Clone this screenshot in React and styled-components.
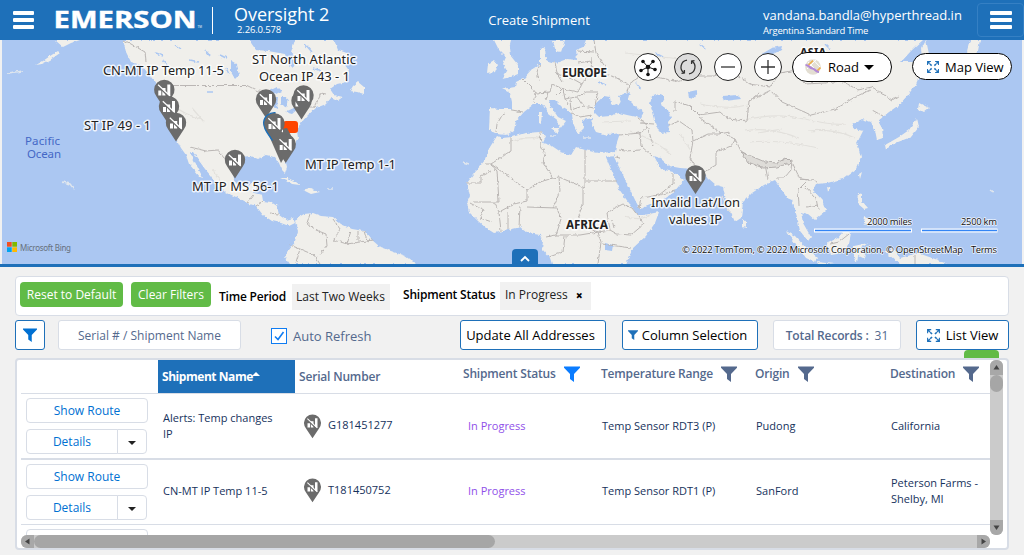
import React from "react";
import styled, { createGlobalStyle, css } from "styled-components";

const BLUE = "#1e70b9";
const LINE = "#d8dde6";
const INK = "#16325c";
const SLATE = "#54698d";

const Global = createGlobalStyle`
  * { box-sizing: border-box; }
  body {
    margin: 0;
    background: #f1f1f1;
    font-family: "Open Sans", "Noto Sans", sans-serif;
    overflow: hidden;
  }
  button { font-family: inherit; margin: 0; padding: 0; cursor: pointer; }
`;

const Page = styled.div`
  width: 1024px;
  height: 555px;
  display: flex;
  flex-direction: column;
  overflow: hidden;
`;

/* ---------- header ---------- */

const Header = styled.header`
  height: 40px;
  flex: none;
  display: flex;
  align-items: center;
  background: ${BLUE};
  color: #fff;
  white-space: nowrap;
`;

const Bars = styled.span`
  display: flex;
  flex-direction: column;
  gap: 3px;
  width: ${(p) => p.$w || 21}px;
  i { display: block; height: 4px; background: #fff; border-radius: 1px; }
`;

const MenuButton = styled.button`
  border: ${(p) => (p.$framed ? "1px solid #3580c4" : "0")};
  border-radius: 4px;
  background: transparent;
  height: 34px;
  width: 47px;
  padding-left: ${(p) => (p.$framed ? 12 : 13)}px;
`;

const Logo = styled.svg`
  display: block;
  width: 150px;
  height: 24px;
  margin-left: 6px;
  overflow: visible;
`;

const Divider = styled.span`
  width: 1px;
  height: 27px;
  margin-left: 9px;
  background: #fff;
`;

const TitleBlock = styled.div`
  margin-left: 21px;
  width: 180px;
  height: 40px;
  padding-top: 3px;
`;

const Title = styled.div`
  font-size: 18px;
  line-height: 23px;
  letter-spacing: -0.05px;
`;

const Version = styled.div`
  font-size: 9.5px;
  line-height: 8px;
  padding-left: 3px;
  letter-spacing: -0.15px;
`;

const PageName = styled.div`
  width: 250px;
  text-align: center;
  font-size: 13px;
  line-height: 18px;
`;

const User = styled.div`
  margin-left: auto;
  width: 214px;
  height: 40px;
  padding-top: 6px;
`;

const Email = styled.div`
  font-size: 13px;
  line-height: 18px;
`;

const Zone = styled.div`
  font-size: 9.5px;
  line-height: 13px;
  letter-spacing: -0.22px;
`;

/* ---------- map ---------- */

const MapArea = styled.section`
  position: relative;
  flex: none;
  height: 227px;
  border-bottom: 3px solid ${BLUE};
  padding: 0 2px;
`;

const MapCanvas = styled.svg`
  display: block;
  width: 1020px;
  height: 224px;
  background: #abc7f2;
`;

const MapControls = styled.div`
  position: absolute;
  top: 12px;
  left: 634px;
  width: 378px;
  height: 30px;
  display: flex;
  align-items: center;
`;

const RoundButton = styled.button`
  width: 28px;
  height: 28px;
  margin-right: 12px;
  border: 1px solid #222;
  border-radius: 50%;
  background: ${(p) => (p.$dim ? "#dcdcdc" : "#fff")};
  display: flex;
  align-items: center;
  justify-content: center;
`;

const Pill = styled.button`
  height: ${(p) => p.$h}px;
  width: 100px;
  margin-left: ${(p) => p.$left || 0}px;
  margin-right: ${(p) => p.$right || 0}px;
  margin-bottom: ${(p) => p.$lift || 0}px;
  border: 1px solid #000;
  border-radius: 15px;
  background: #fff;
  font-size: 13px;
  color: #000;
  display: flex;
  align-items: center;
  padding-left: ${(p) => p.$pad}px;
  gap: ${(p) => p.$gap}px;
  white-space: nowrap;
`;

const Caret = styled.i`
  border: 5px solid transparent;
  border-width: ${(p) => p.$s || 5}px ${(p) => p.$s || 5}px 0;
  border-top-color: ${(p) => p.$c || "#000"};
  margin-left: ${(p) => p.$shift || 0}px;
`;

const CollapseTab = styled.button`
  position: absolute;
  left: 512px;
  bottom: 0;
  width: 26px;
  height: 15px;
  border: 0;
  border-radius: 4px 4px 0 0;
  background: ${BLUE};
  display: flex;
  align-items: center;
  justify-content: center;
  padding-top: 3px;
`;

/* ---------- filters and toolbar ---------- */

const Content = styled.main`
  flex: 1;
  padding: 9px 15px 0;
  display: flex;
  flex-direction: column;
`;

const FilterPanel = styled.div`
  height: 40px;
  flex: none;
  background: #fff;
  border: 1px solid ${LINE};
  border-radius: 4px;
  display: flex;
  align-items: flex-start;
  padding: 5px 0 0 4px;
  white-space: nowrap;
`;

const GreenButton = styled.button`
  height: 25px;
  width: ${(p) => p.$w}px;
  margin-right: 8px;
  border: 0;
  border-radius: 4px;
  background: #61bb46;
  color: #fff;
  font-size: 12px;
`;

const FilterName = styled.span`
  width: ${(p) => p.$w}px;
  margin-top: ${(p) => p.$top}px;
  font-size: 12px;
  font-weight: 600;
  line-height: 18px;
  color: #000;
  letter-spacing: -0.2px;
`;

const Chip = styled.span`
  margin-top: ${(p) => p.$top || 0}px;
  margin-right: 13px;
  width: ${(p) => p.$w}px;
  height: ${(p) => p.$h}px;
  line-height: 25px;
  padding-left: ${(p) => p.$pad || 5}px;
  background: #f1f1f1;
  font-size: 12px;
  color: #222;
  display: flex;
  gap: 8px;
  b { font-size: 12px; line-height: 27px; font-weight: 800; color: #000; }
`;

const Toolbar = styled.div`
  height: 30px;
  flex: none;
  margin-top: 4px;
  display: flex;
  align-items: center;
  white-space: nowrap;
`;

const box = css`
  height: 30px;
  width: ${(p) => p.$w}px;
  margin-left: ${(p) => p.$left || 0}px;
  padding-right: ${(p) => p.$nudge || 0}px;
  background: #fff;
  border-radius: 3px;
  display: flex;
  align-items: center;
  justify-content: center;
`;

const OutlineButton = styled.button`
  ${box}
  border: 1px solid ${BLUE};
  font-size: 13px;
  color: #000;
  gap: ${(p) => p.$gap || 4}px;
`;

const SearchBox = styled.div`
  ${box}
  border: 1px solid ${LINE};
  font-size: 12px;
  color: ${SLATE};
`;

const Total = styled.div`
  ${box}
  border: 1px solid ${LINE};
  font-size: 12px;
  color: ${SLATE};
  gap: 6px;
  b { font-weight: 600; letter-spacing: -0.15px; }
`;

const Check = styled.label`
  display: flex;
  align-items: center;
  gap: 6px;
  margin-left: 30px;
  width: 189px;
  padding-top: 2px;
  font-size: 13px;
  color: ${SLATE};
`;

const CheckSquare = styled.span`
  width: 16px;
  height: 16px;
  border: 1px solid #0f7cf2;
  background: #fff;
  display: flex;
  align-items: center;
  justify-content: center;
`;

/* ---------- table ---------- */

const GreenTab = styled.span`
  align-self: flex-end;
  flex: none;
  width: 35px;
  height: 8px;
  margin-right: 10px;
  border-radius: 4px 4px 0 0;
  background: #61bb46;
`;

const Panel = styled.div`
  flex: none;
  height: 192px;
  border: 2px solid ${LINE};
  border-radius: 4px;
  background: #fff;
  padding: 0 4px;
  display: grid;
  grid-template-columns: 969px 13px;
  grid-template-rows: 175px 13px;
`;

const Viewport = styled.div`
  overflow: hidden;
`;

const grid = css`
  display: grid;
  grid-template-columns: 137px 137px 164px 138px 154px 135px 104px;
`;

const HeadRow = styled.div`
  ${grid}
  height: 34px;
  border-bottom: 1px solid ${LINE};
`;

const HeadCell = styled.div`
  display: flex;
  align-items: center;
  gap: 8px;
  height: 33px;
  padding-left: 4px;
  padding-bottom: ${(p) => p.$up || 0}px;
  background: ${(p) => (p.$active ? BLUE : "transparent")};
  color: ${(p) => (p.$active ? "#fff" : SLATE)};
  font-size: 12px;
  font-weight: ${(p) => (p.$active ? 700 : 600)};
  letter-spacing: ${(p) => (p.$active ? -0.45 : -0.18)}px;
  white-space: nowrap;
  svg { flex: none; margin-top: 2px; }
`;

const SortMark = styled.i`
  margin: -6px 0 0 -9px;
  border: 4px solid transparent;
  border-width: 0 4px 4px;
  border-bottom-color: #fff;
`;

const Row = styled.div`
  ${grid}
  height: ${(p) => p.$h}px;
  border-bottom: ${(p) => p.$line}px solid ${LINE};
`;

const Cell = styled.div`
  display: flex;
  align-items: center;
  padding-left: ${(p) => p.$pad || 5}px;
  padding-bottom: ${(p) => p.$up || 0}px;
  font-size: 11px;
  line-height: ${(p) => p.$lh || 16}px;
  color: ${(p) => p.$color || INK};
  white-space: pre-line;
`;

const SerialCell = styled(Cell)`
  padding-left: 9px;
  padding-bottom: ${(p) => 2 + (p.$up || 0)}px;
  gap: 7px;
  svg { margin-top: ${(p) => (p.$up ? 1 : 2)}px; }
`;

const Actions = styled.div`
  padding: 4px 0 0 5px;
`;

const ActionButton = styled.button`
  display: block;
  width: ${(p) => p.$w}px;
  height: 25px;
  background: #fff;
  border: 1px solid ${LINE};
  border-radius: ${(p) => p.$r || "4px"};
  color: #0070d2;
  font-size: 12px;
`;

const Split = styled.div`
  display: flex;
  margin-top: 6px;
`;

const CaretButton = styled.button`
  width: 30px;
  height: 25px;
  margin-left: -1px;
  border: 1px solid ${LINE};
  border-radius: 0 4px 4px 0;
  background: #fff;
  display: flex;
  align-items: center;
  justify-content: center;
  padding-top: 2px;
`;

const ScrollTrack = styled.div`
  display: flex;
  flex-direction: ${(p) => (p.$v ? "column" : "row")};
  background: #cbcbcb;
  border-radius: 6px;
  overflow: hidden;
`;

const ScrollEnd = styled.span`
  width: 13px;
  height: ${(p) => (p.$v ? 15 : 13)}px;
  flex: none;
  background: #a8a8a8;
  display: flex;
  align-items: center;
  justify-content: center;
  &:last-child { margin-${(p) => (p.$v ? "top" : "left")}: auto; }
`;

const Thumb = styled.span`
  width: ${(p) => p.$w}px;
  height: ${(p) => p.$h}px;
  border-radius: 7px;
  background: #a6a6a6;
`;

/* ---------- icons ---------- */

const Funnel = ({ size = 16, color = SLATE }) => (
  <svg width={size} height={size} viewBox="0 0 16 16">
    <path d="M0 0.5h16v1.2L10 8v8l-4-3V8L0 1.7z" fill={color} />
  </svg>
);

const Expand = ({ size = 13 }) => (
  <svg width={size} height={size} viewBox="0 0 13 13" fill="none" stroke={BLUE} strokeWidth="1.1">
    <path d="M0.6 4.2V0.6H4.2M8.8 0.6h3.6v3.6M12.4 8.8v3.6H8.8M4.2 12.4H0.6V8.8" />
    <path d="M1 1l4.2 4.2M12 1L7.8 5.2M12 12L7.8 7.8M1 12l4.2-4.2" strokeWidth="1.6" strokeDasharray="2.6 0.5" />
  </svg>
);

const Arrow = ({ dir }) => {
  const turn = { up: 0, right: 90, down: 180, left: 270 }[dir];
  return (
    <svg width="7" height="7" viewBox="0 0 7 7">
      <path d="M3.5 1L6.5 5.5H0.5z" fill="#444" transform={`rotate(${turn} 3.5 3.5)`} />
    </svg>
  );
};

const PinShape = () => (
  <g>
    <path d="M0 18.500L-7.800 6.600A10.200 10.200 0 1 1 7.800 6.600z" fill="#6b6b6b" />
    <path d="M-6 0.500h3v5h-3zM-2-2h3.200v7.500h-3.200zM3-5.500h3v11h-3z" fill="#fff" />
    <path d="M-6-3.800L4.500 6.700" stroke="#6b6b6b" strokeWidth="1.600" />
    <path d="M-6.200-5.200L5.800 6" stroke="#fff" strokeWidth="1.200" />
  </g>
);

const SerialPin = () => (
  <svg width="17" height="25" viewBox="-10.2 -10.2 20.4 29">
    <PinShape />
  </svg>
);

/* ---------- map drawing ---------- */

const LAND = [
  // North and Central America
  "M123 40L126 52L131 62L141 65L148 73L154 81L160 88L161 97L164 112L166 120L172 131L178 142L181 148L186 155L189 164L195 171L200 177L203 178L199 170L194 160L190 152L193 152L197 158L205 169L211 176L216 184L225 192L236 197L247 203L256 206L263 215L272 221L281 223L289 226L295 223L293 218L286 220L279 215L277 206L271 202L263 201L262 195L254 193L259 183L252 182L248 187L239 187L234 180L233 168L240 157L251 156L258 159L266 155L275 157L279 163L282 170L285 173L287 167L285 158L292 147L298 138L297 131L301 123L308 115L316 108L326 104L331 98L337 101L343 97L334 95L330 89L337 84L346 82L350 72L345 65L350 62L347 53L338 50L334 40L295 40L291 52L297 60L293 68L287 62L285 54L268 51L256 50L249 40z",
  "M353 86L358 82L364 87L364 94L357 92L350 91z",
  // Alaska chain
  "M55 40L63 47L71 43L80 40z",
  "M36 65L43 61L50 56L58 51L60 53L50 60L42 64z",
  // Caribbean
  "M281 178L288 178L296 182L300 185L292 184L286 180z",
  "M303 190L311 188L320 192L311 194z",
  // South America
  "M295 222L299 217L304 214L313 213L321 216L333 217L341 224L352 229L364 231L371 239L380 247L391 251L405 256L416 264L290 264L285 257L288 250L295 241L298 231z",
  // British Isles
  "M494 40L511 40L509 48L510 55L518 65L518 74L511 77L502 79L507 71L503 64L506 57L499 50z",
  "M488 64L494 60L498 65L495 72L487 73z",
  // Africa
  "M497 136L490 147L485 160L476 171L467 183L470 196L467 203L469 212L478 221L486 228L494 233L508 230L521 227L528 233L540 235L543 241L542 249L550 258L552 264L626 264L632 249L646 236L655 223L659 212L644 215L637 215L632 207L626 199L619 189L614 176L608 162L606 157L615 156L615 152L598 153L585 150L576 147L571 155L561 152L552 146L543 143L546 136L540 132L525 133L512 137L502 138z",
  // Europe and Asia
  "M490 108L500 109L512 109L512 102L510 93L502 89L515 87L516 82L524 78L531 70L540 64L540 50L545 47L546 60L556 63L567 59L577 60L576 50L583 47L586 40L923 40L911 51L901 62L916 62L921 72L916 84L908 95L899 105L889 112L878 121L882 128L883 138L877 140L875 130L871 122L862 119L853 124L855 129L863 131L857 143L861 157L856 169L843 179L827 183L816 184L813 190L822 200L826 211L815 220L808 214L801 212L803 223L811 237L808 241L800 231L797 217L792 200L787 198L780 187L775 180L764 185L752 193L743 202L741 218L735 222L727 204L723 187L716 185L708 178L703 171L693 169L680 168L669 166L660 158L654 156L661 169L673 172L684 180L673 193L663 200L640 209L636 202L626 181L614 157L615 152L617 142L620 133L607 135L596 132L592 125L593 118L582 120L584 128L578 134L573 123L572 113L563 108L555 100L549 100L551 107L558 117L566 121L560 129L556 119L548 113L542 104L534 104L524 112L516 121L514 130L507 135L497 134L489 130z",
  "M552 40L556 51L561 52L565 40z",
  "M539 112L542 112L541 124L539 123z",
  "M551 128L559 128L557 133z",
  // Japan, Sakhalin, Kamchatka
  "M918 109L919 103L929 108L924 112z",
  "M917 118L919 127L911 137L898 142L890 146L886 150L885 145L899 137L909 130z",
  "M926 40L929 54L923 62L922 48z",
  "M970 40L967 51L972 62L978 51L980 40z",
  // South-east Asia
  "M859 174L862 172L860 179z",
  "M827 187L831 188L828 192z",
  "M742 219L746 222L746 228L742 227z",
  "M858 193L862 194L862 201L868 208L864 209L857 203z",
  "M865 216L872 220L871 226L864 223z",
  "M786 231L795 236L806 248L817 258L815 262L806 258L796 244z",
  "M827 243L838 238L846 228L851 233L849 243L843 253L831 255z",
  "M854 246L868 243L860 249L866 259L858 255L857 263L854 258z",
  "M884 251L895 250L900 258L918 253L935 259L947 264L900 264z",
  "M817 262L835 264L818 264z",
];

const INNER_WATER = [
  "M595 113L595 104L604 96L610 97L611 104L614 106L621 103L619 96L630 91L628 99L635 106L643 112L641 118L627 115L619 113L610 116L599 117z",
  "M652 96L661 94L665 98L661 105L668 110L671 118L668 122L669 132L660 133L656 123L653 112L650 104z",
  "M269 91L277 87L282 92L276 95zM274 97L278 97L277 109L273 107zM281 96L288 99L286 108L281 103zM285 112L294 108L300 107L292 114z",
  "M231 61L236 64L239 75L235 79L231 72z",
  "M605 243L613 245L612 251L605 250z",
  "M688 92L697 90L695 98L689 97z",
  "M722 96L738 95L741 99L724 101z",
  "M760 55L772 48L782 46L781 50L767 57z",
];

const BORDERS = [
  "M168 85.500H247L258 91L268 92M190 147L206 151L218 150L224 158L233 161",
  "M301 107L314 107L321 93L326 94M124 40L145 52L146 62",
  "M247 203L253 195M256 206L262 202M271 213L278 214",
  "M310 214L307 223L316 230L326 234L327 246L320 255M333 219L340 229L334 240L347 244L351 232M358 231V240M364 231L367 241M290 245L300 249L296 262M300 249L314 255L320 264M347 244L366 241L373 240",
  "M504 112L497 124L496 132M512 110L523 112M523 79L532 88L536 93L533 102M540 64L537 72L539 81M555 62L557 74L562 82M557 74L575 80L582 84L578 92L563 89L552 84M552 84L550 92L536 93M563 89L565 99L577 97L586 92L598 92L595 105M577 97L583 106L594 108M563 89L556 96M570 100L571 110L580 107M572 113L580 117L592 115M565 99L568 104M578 63L590 61L594 69L604 74L615 77L629 85L627 92M577 51L594 52M594 40L596 53L606 68M592 57L591 70L582 84M582 75L590 75M548 92L546 100",
  "M485 164H491L511 151V137M491 164L527 190L540 182L553 178L559 177L585 188V150M491 164L497 171L499 202H474M540 132L541 146L545 154L543 163L553 178M586 181H617M583 188V205L579 214L584 226L598 232L610 230L607 213L615 208M559 177L560 191L553 208M527 190L527 201L514 204L499 212L494 202M499 212L501 231M508 212V230M520 206L519 227M527 207L557 208L561 220L556 235L546 237M556 235H580L598 232M565 236L563 252L549 257M598 232L601 242L598 264M615 208L623 204L632 208L644 224L631 235L617 234L610 230M602 244L631 248M614 228L612 220M467 183H481V176L491 171M470 203L483 210L480 218L492 222",
  "M619 135L640 133L641 146L652 156M619 150L625 151L640 150M638 118L646 124L650 135L653 146M640 133L648 126M640 123L654 124M639 209L641 198L659 195L675 191M659 195L673 184L673 173M620 158L615 157",
  "M668 126L679 121L692 130L693 141L690 158L695 166M675 111V101L690 106L699 115L720 112L728 119L747 121M693 141L708 134L719 134L730 132M628 85L640 76L662 78L678 82L694 76L714 76L730 70L750 84L770 87L780 73L796 70L805 84L824 83L842 81L858 90L872 87L892 100L899 96M747 121L749 101L759 93M749 101L771 90L782 102L811 115L835 109L855 97L870 90M700 118L718 131L735 139L731 146L716 152L716 165L704 172",
  "M735 139L741 151L751 157L765 164L780 165L792 160L791 170L784 178L776 178M765 164L768 180M791 160L800 179L808 180L798 190L799 205M800 179L812 180L818 183M805 186L816 198L818 209M807 207L818 205M872 110L883 116",
  "M915 255V264M830 244L839 242L849 234",
];

const RELIEF = [
  "M740 121Q775 112 805 119T845 124M745 131Q768 126 799 138M750 142Q780 139 818 148M630 131Q650 137 671 154M700 104Q730 110 747 105M510 142Q530 135 541 139M625 216Q640 222 651 214M172 104Q185 116 203 119M192 108L204 122M212 169L223 184M722 196L731 214M758 133L782 129M601 122L630 121M808 131Q835 128 855 138M680 134L693 154M625 53L690 60M826 60L869 62",
];

const Label = ({ x, y, w, size = 13, weight = 400, fill = "#222", halo = 3, children, family = "Noto Sans" }) => (
  <text
    x={x} y={y} textLength={w} fontSize={size} fontWeight={weight} fill={fill}
    stroke="#fff" strokeWidth={halo} strokeLinejoin="round" paintOrder="stroke"
    strokeOpacity="0.8" fontFamily={`"${family}", sans-serif`}
  >
    {children}
  </text>
);

const PINS = [[164.3, 90], [169, 106.5], [176, 123], [235, 160], [266, 99.5], [301.5, 101], [303.5, 95.5]];

const WorldMap = () => (
  <MapCanvas viewBox="2 40 1020 224">
    <defs>
      <filter id="coast" x="0" y="0" width="100%" height="100%">
        <feTurbulence type="fractalNoise" baseFrequency="0.25" numOctaves="2" seed="4" />
        <feDisplacementMap in="SourceGraphic" scale="3.5" xChannelSelector="R" yChannelSelector="G" />
      </filter>
    </defs>
    <rect x="2" y="40" width="1020" height="224" fill="#abc7f2" />
    <g filter="url(#coast)">
      <rect x="2" y="40" width="1020" height="224" fill="#abc7f2" />
      <path d={LAND.join("")} fill="#f0efeb" />
      <path d={INNER_WATER.join("")} fill="#abc7f2" />
      <path d={RELIEF.join("")} fill="none" stroke="#e2e0dc" strokeWidth="1.2" />
      <path d={BORDERS.join("")} fill="none" stroke="#bab6b4" strokeWidth="1" />
      <path d="M155 53l8 3M175 45l6 4M190 60l9 2M205 50l5 6M220 55l6 3M214 72l7 2M226 68l3 6M163 60l4 5M313 68l8 3M305 44l7 8M325 56l7 4M180 70l6 1M206 92h7M598 82l8 3M636 83l5 6M655 53l8 4M700 44l6 5M825 44l5 5" stroke="#abc7f2" strokeWidth="1.5" />
      <path d="M741 152L751 156L765 162L777 163L786 158L791 163L777 167L763 168L748 162z" fill="#dedcd8" stroke="#b4b0ae" />
      <path d="M62 182l8 2l4 5M8 73l15-2M326 189h6M463 162l6 2M990 190l3 2M556 136h-6M583 138h8M607 134h5" stroke="#dfe6ee" strokeWidth="1.5" fill="none" />
    </g>

    <Label x={25} y={145} w={35} size={11.5} fill="#4467c6" halo={0}>Pacific</Label>
    <Label x={27} y={158} w={34} size={11.5} fill="#4467c6" halo={0}>Ocean</Label>
    <Label x={562} y={77} w={45} size={12} weight={700}>EUROPE</Label>
    <Label x={566} y={229} w={42} size={12} weight={700}>AFRICA</Label>
    <Label x={800} y={56} w={26} size={11} weight={700}>ASIA</Label>

    {PINS.map(([x, y]) => (
      <g key={`${x}-${y}`} transform={`translate(${x} ${y})`}><PinShape /></g>
    ))}
    <rect x="283" y="121" width="15" height="12" rx="3" fill="#ff4500" />
    <path d="M267 131L281 163L294 141L287 128z" fill="#6b6b6b" />
    <path d="M281.500 131.500l1.500-3v4z" fill="#fff" />
    <g transform="translate(274.5 123.5)">
      <path d="M-2 17C-6 10-10.800 7-10.800-1A10.800 10.800 0 0 1 1-10.800" fill="#6b6b6b" stroke={BLUE} strokeWidth="1.500" />
      <PinShape />
    </g>
    <g transform="translate(285.7 144.5)"><PinShape /></g>
    <g transform="translate(695.5 175.5)"><PinShape /></g>

    <Label x={103} y={75} w={121}>CN-MT IP Temp 11-5</Label>
    <Label x={252} y={64} w={104}>ST North Atlantic</Label>
    <Label x={259} y={81} w={91}>Ocean IP 43 - 1</Label>
    <Label x={84} y={130} w={67}>ST IP 49 - 1</Label>
    <Label x={305} y={169} w={91}>MT IP Temp 1-1</Label>
    <Label x={192} y={191} w={87}>MT IP MS 56-1</Label>
    <Label x={651} y={207} w={89}>Invalid Lat/Lon</Label>
    <Label x={669} y={224} w={53}>values IP</Label>

    <path d="M7 242h4.700v4.700H7z" fill="#f25022" />
    <path d="M12.300 242H17v4.700h-4.700z" fill="#7fba00" />
    <path d="M7 247.300h4.700V252H7z" fill="#00a4ef" />
    <path d="M12.300 247.300H17V252h-4.700z" fill="#ffb900" />
    <Label x={20} y={250.5} w={51} size={8} fill="#66707c" halo={0}>Microsoft Bing</Label>

    <path d="M814 230.500h98M921 230.500h76.500" stroke="#fff" strokeWidth="4" />
    <path d="M815 230.500h96M922 230.500h75" stroke="#3385f5" strokeWidth="1.600" />
    <Label x={867} y={225} w={45} size={9.5} halo={1.5} fill="#111" family="Open Sans">2000 miles</Label>
    <Label x={961} y={225} w={36} size={9.5} halo={1.5} fill="#111" family="Open Sans">2500 km</Label>
    <Label x={682} y={253} w={281} size={9.5} halo={1.5} fill="#111" family="Open Sans">© 2022 TomTom, © 2022 Microsoft Corporation, © OpenStreetMap</Label>
    <Label x={971} y={253} w={26} size={9.5} halo={1.5} fill="#111" family="Open Sans">Terms</Label>
  </MapCanvas>
);

const ClusterIcon = () => (
  <svg width="20" height="20" viewBox="-10 -10 20 20">
    <path d="M0 0L-5-5.500M0 0L5-5.500M0 0L-7 3.500M0 0L7 2.500M0 0V8" stroke="#111" strokeWidth="1" />
    {[[-5, -5.5], [5, -5.5], [-7, 3.5], [7, 2.5], [0, 7.5]].map(([x, y]) => (
      <circle key={`${x}${y}`} cx={x} cy={y} r="1.8" fill="#111" />
    ))}
    <circle r="2.3" fill="#111" />
  </svg>
);

const RefreshIcon = () => (
  <svg width="18" height="18" viewBox="-9 -9 18 18" fill="none" stroke="#333" strokeWidth="1.3">
    <path d="M-3.800 5.900A7 7 0 0 1-1-6.900M3.800-5.900A7 7 0 0 1 1 6.900" />
    <path d="M-6.500 6.300L-3.600 6V3M6.500-6.300L3.600-6V-3" />
  </svg>
);

const RoadIcon = () => (
  <svg width="16" height="16" viewBox="0 0 16 16">
    <circle cx="8" cy="8" r="7.8" fill="#e3ded2" />
    <path d="M3 3L13 13M8 0.500L15 8M2 10L11 1" stroke="#fff" strokeWidth="1" />
    <path d="M3.500 6L8 1.500M12 12L15.500 8.500" stroke="#eeb04f" strokeWidth="1.700" />
    <path d="M0.500 6C4 6 4 9 7.500 9.500S10 13 14 13" fill="none" stroke="#b288d6" strokeWidth="2.200" />
  </svg>
);

/* ---------- data ---------- */

const COLUMNS = [
  { name: "Shipment Status", color: "#0a7cff" },
  { name: "Temperature Range", color: SLATE },
  { name: "Origin", color: SLATE },
  { name: "Destination", color: SLATE },
];

const ROWS = [
  { h: 66, line: 2, up: 0, name: "Alerts: Temp changes\nIP", serial: "G181451277", range: "Temp Sensor RDT3 (P)", origin: "Pudong", dest: "California" },
  { h: 65, line: 1, up: 2, name: "CN-MT IP Temp 11-5", serial: "T181450752", range: "Temp Sensor RDT1 (P)", origin: "SanFord", dest: "Peterson Farms -\nShelby, MI" },
];

const RowActions = () => (
  <Actions>
    <ActionButton $w={122}>Show Route</ActionButton>
    <Split>
      <ActionButton $w={92} $r="4px 0 0 4px">Details</ActionButton>
      <CaretButton><Caret $s={4} $c="#222" /></CaretButton>
    </Split>
  </Actions>
);

export default function App() {
  return (
    <Page>
      <Global />
      <Header>
        <MenuButton><Bars><i /><i /><i /></Bars></MenuButton>
        <Logo viewBox="0 0 150 24">
          <text x="0.5" y="19.5" textLength="143" lengthAdjust="spacingAndGlyphs" fontFamily="Open Sans" fontWeight="700" fontSize="23.5" fill="#fff" stroke="#fff" strokeWidth="0.4">EMERSON</text>
          <text x="144.5" y="19.5" fontFamily="Open Sans" fontSize="3" fill="#fff">TM</text>
        </Logo>
        <Divider />
        <TitleBlock>
          <Title>Oversight 2</Title>
          <Version>2.26.0.578</Version>
        </TitleBlock>
        <PageName>Create Shipment</PageName>
        <User>
          <Email>vandana.bandla@hyperthread.in</Email>
          <Zone>Argentina Standard Time</Zone>
        </User>
        <MenuButton $framed><Bars $w={22}><i /><i /><i /></Bars></MenuButton>
      </Header>

      <MapArea>
        <WorldMap />
        <MapControls>
          <RoundButton><ClusterIcon /></RoundButton>
          <RoundButton $dim><RefreshIcon /></RoundButton>
          <RoundButton><svg width="16" height="16"><path d="M1 8h14" stroke="#333" strokeWidth="1.3" /></svg></RoundButton>
          <RoundButton><svg width="16" height="16"><path d="M1 8h14M8 1v14" stroke="#333" strokeWidth="1.3" /></svg></RoundButton>
          <Pill $h={30} $left={-2} $right={20} $pad={12} $gap={7}>
            <RoadIcon />
            <span>Road</span>
            <Caret $s={5} $shift={-2} />
          </Pill>
          <Pill $h={27} $pad={14} $gap={6} $lift={1}>
            <Expand size={12} />
            <span>Map View</span>
          </Pill>
        </MapControls>
        <CollapseTab>
          <svg width="10" height="7" viewBox="0 0 10 7"><path d="M1 6L5 2L9 6" fill="none" stroke="#fff" strokeWidth="1.8" /></svg>
        </CollapseTab>
      </MapArea>

      <Content>
        <FilterPanel>
          <GreenButton $w={103}>Reset to Default</GreenButton>
          <GreenButton $w={80}>Clear Filters</GreenButton>
          <FilterName $w={73} $top={6}>Time Period</FilterName>
          <Chip $w={98} $h={26} $top={2} $pad={4}>Last Two Weeks</Chip>
          <FilterName $w={97} $top={4}>Shipment Status</FilterName>
          <Chip $w={91} $h={28}>In Progress <b>×</b></Chip>
        </FilterPanel>

        <Toolbar>
          <OutlineButton $w={30}><Funnel size={14} color="#0070d2" /></OutlineButton>
          <SearchBox $w={183} $left={13}>Serial # / Shipment Name</SearchBox>
          <Check>
            <CheckSquare>
              <svg width="12" height="12" viewBox="0 0 12 12"><path d="M2 6.500L5 9.500L10.500 2" fill="none" stroke="#0f7cf2" strokeWidth="1.600" /></svg>
            </CheckSquare>
            Auto Refresh
          </Check>
          <OutlineButton $w={146} $nudge={5}>Update All Addresses</OutlineButton>
          <OutlineButton $w={136} $left={16} $nudge={5}><Funnel size={10} color={BLUE} />Column Selection</OutlineButton>
          <Total $w={128} $left={15}><b>Total Records :</b><span>31</span></Total>
          <OutlineButton $w={93} $left={15} $gap={6}><Expand />List View</OutlineButton>
        </Toolbar>

        <GreenTab />
        <Panel>
          <Viewport>
            <HeadRow>
              <HeadCell />
              <HeadCell $active>Shipment Name<SortMark /></HeadCell>
              <HeadCell>Serial Number</HeadCell>
              {COLUMNS.map((c) => (
                <HeadCell key={c.name} $up={7}>
                  {c.name}<Funnel color={c.color} />
                </HeadCell>
              ))}
            </HeadRow>
            {ROWS.map((r) => (
              <Row key={r.serial} $h={r.h} $line={r.line}>
                <RowActions />
                <Cell $up={r.up}>{r.name}</Cell>
                <SerialCell $up={r.up}><SerialPin />{r.serial}</SerialCell>
                <Cell $up={r.up} $pad={9} $color="#9050e9">In Progress</Cell>
                <Cell $up={r.up}>{r.range}</Cell>
                <Cell $up={r.up}>{r.origin}</Cell>
                <Cell $up={r.up}>{r.dest}</Cell>
              </Row>
            ))}
            <Row $h={66} $line={1}><RowActions /></Row>
          </Viewport>
          <ScrollTrack $v>
            <ScrollEnd $v><Arrow dir="up" /></ScrollEnd>
            <Thumb $w={13} $h={17} />
            <ScrollEnd $v><Arrow dir="down" /></ScrollEnd>
          </ScrollTrack>
          <ScrollTrack>
            <ScrollEnd><Arrow dir="left" /></ScrollEnd>
            <Thumb $w={461} $h={13} />
            <ScrollEnd><Arrow dir="right" /></ScrollEnd>
          </ScrollTrack>
        </Panel>
      </Content>
    </Page>
  );
}
